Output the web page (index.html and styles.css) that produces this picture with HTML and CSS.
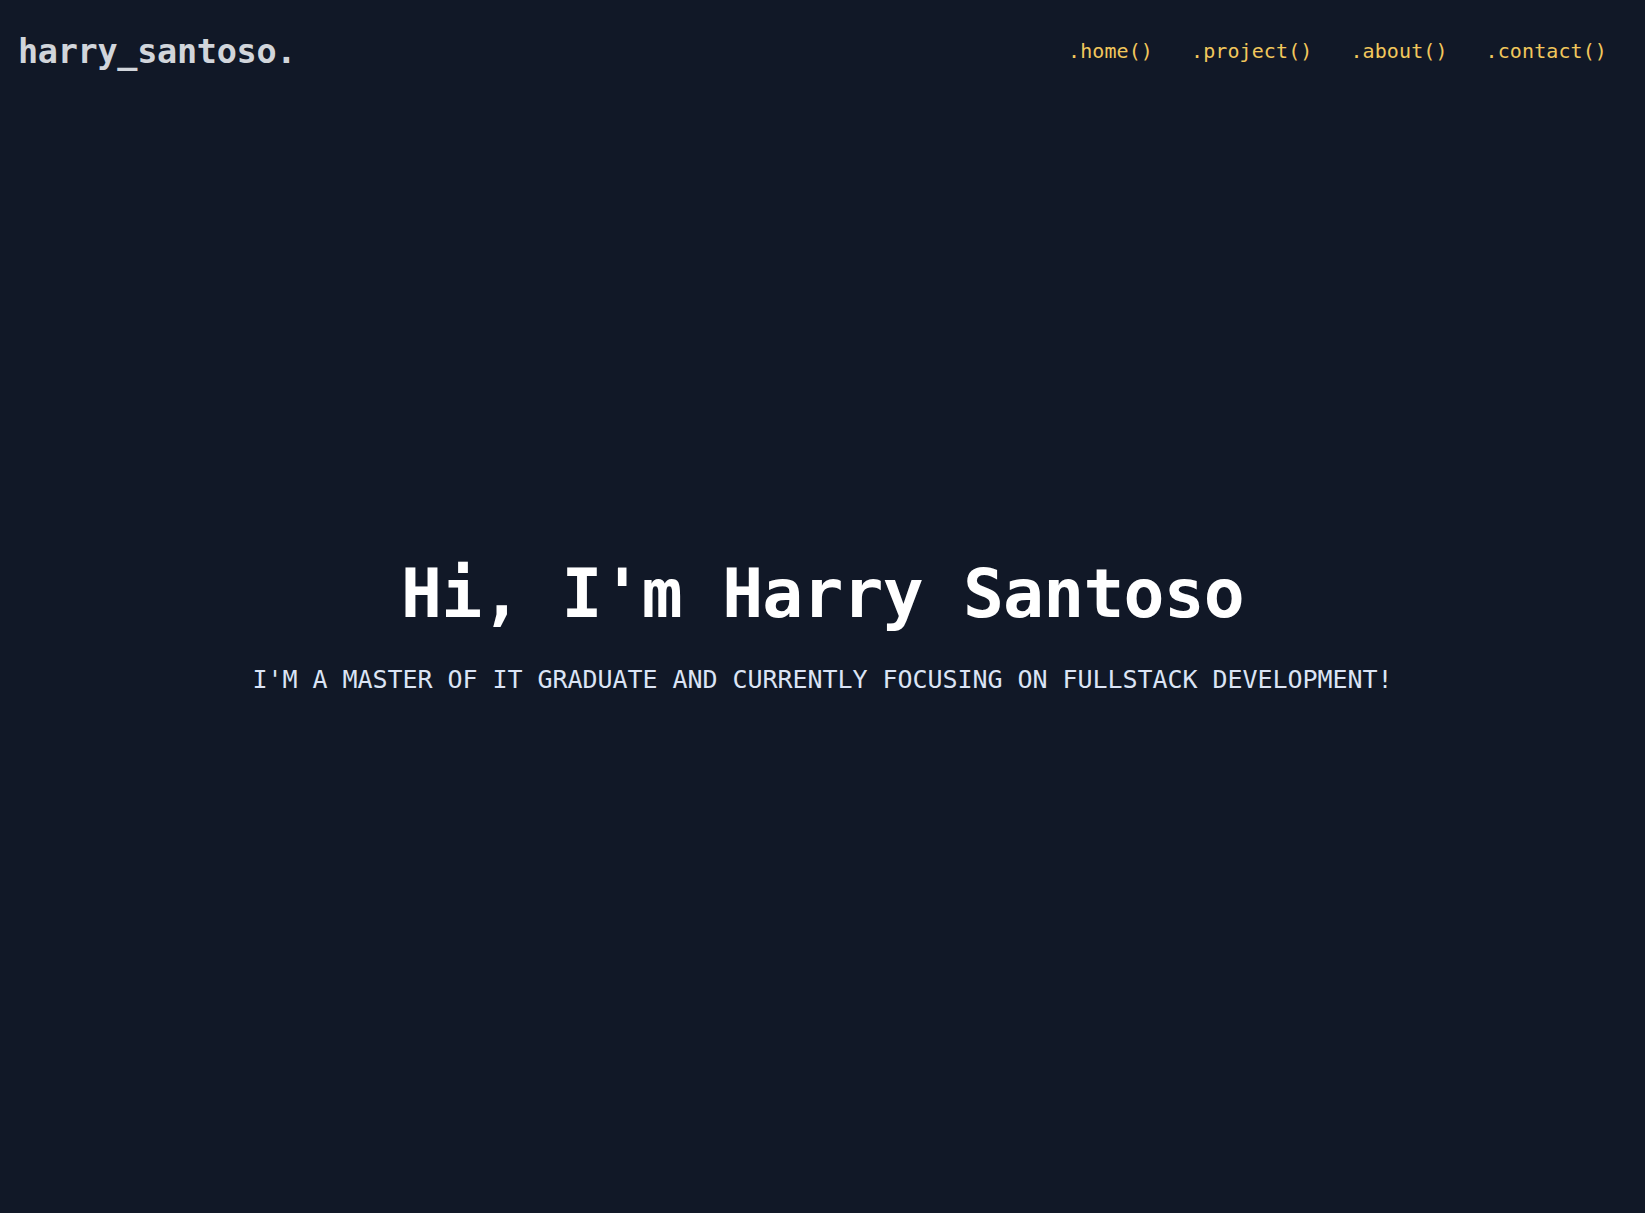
FILE: index.html
```html
<!DOCTYPE html>
<html lang="en">
<head>
<meta charset="utf-8">
<title>Harry Santoso</title>
<link rel="stylesheet" href="styles.css">
</head>
<body>
<div class="page">
  <header class="topbar">
    <a class="logo" href="#">harry_santoso.</a>
    <nav class="nav">
      <a href="#">.home()</a>
      <a href="#">.project()</a>
      <a href="#">.about()</a>
      <a href="#">.contact()</a>
    </nav>
  </header>
  <main class="hero">
    <h1 class="title">Hi, I'm Harry Santoso</h1>
    <p class="subtitle">I'm a master of IT graduate and currently focusing on fullstack development!</p>
  </main>
</div>
</body>
</html>
```
FILE: styles.css
```css
html, body {
  margin: 0;
  padding: 0;
  background: #111827;
}
body {
  font-family: "DejaVu Sans Mono", "Liberation Mono", monospace;
  color: #ffffff;
}
a { text-decoration: none; }
.page {
  min-height: 1213px;
  display: flex;
  flex-direction: column;
}
.topbar {
  display: flex;
  align-items: center;
  justify-content: space-between;
  height: 102px;
  padding: 0 38px 0 18px;
}
.logo {
  font-size: 33.5px;
  font-weight: bold;
  color: #d1d5db;
  letter-spacing: -0.3px;
}
.nav {
  display: flex;
  gap: 38px;
}
.nav a {
  font-size: 20px;
  color: #f2c75c;
  letter-spacing: 0.1px;
}
.hero {
  flex: 1;
  display: flex;
  flex-direction: column;
  align-items: center;
  padding-top: 451px;
}
.title {
  margin: 0;
  font-size: 68px;
  font-weight: bold;
  color: #ffffff;
  letter-spacing: -0.8px;
  line-height: 1.2;
}
.subtitle {
  margin: 30px 0 0;
  font-size: 25px;
  color: #dbe4f5;
  text-transform: uppercase;
  letter-spacing: -0.05px;
}
```
